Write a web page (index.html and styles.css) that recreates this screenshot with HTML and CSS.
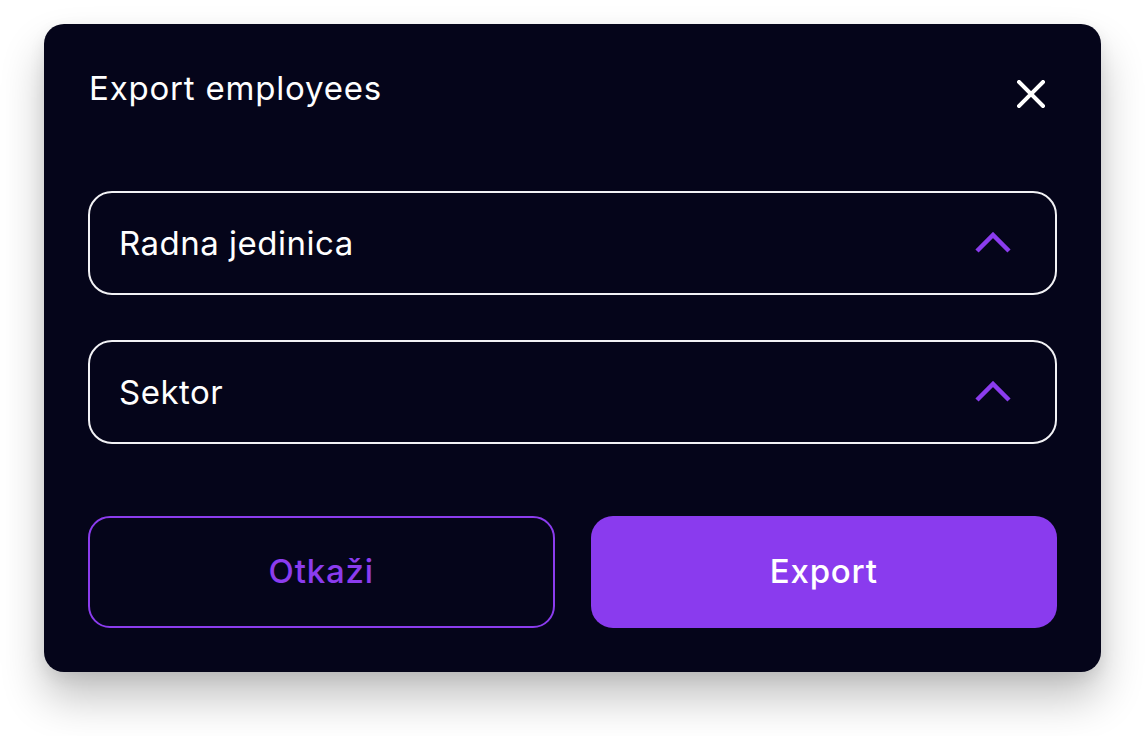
FILE: index.html
```html
<!DOCTYPE html>
<html lang="hr">
<head>
<meta charset="utf-8">
<title>Export employees</title>
<link rel="stylesheet" href="styles.css">
</head>
<body>
<div class="page">
<div class="modal">
  <div class="modal-header">
    <h1 class="modal-title">Export employees</h1>
    <button class="close-btn" aria-label="Close">
      <svg width="28" height="28" viewBox="0 0 28 28"><path d="M2 2 L26 26 M26 2 L2 26" stroke="#ffffff" stroke-width="4" stroke-linecap="square" fill="none"/></svg>
    </button>
  </div>
  <div class="fields">
    <div class="select">
      <span class="select-label">Radna jedinica</span>
      <svg class="chevron" width="36" height="22" viewBox="0 0 36 22"><polyline points="2,19 18,3 34,19" stroke="#8b3cee" stroke-width="4.5" fill="none"/></svg>
    </div>
    <div class="select">
      <span class="select-label">Sektor</span>
      <svg class="chevron" width="36" height="22" viewBox="0 0 36 22"><polyline points="2,19 18,3 34,19" stroke="#8b3cee" stroke-width="4.5" fill="none"/></svg>
    </div>
  </div>
  <div class="actions">
    <button class="btn btn-outline">Otkaži</button>
    <button class="btn btn-primary">Export</button>
  </div>
</div>
</div>
</body>
</html>
```

FILE: styles.css
```css
html, body {
  margin: 0;
  padding: 0;
  background: #ffffff;
}
body {
  font-family: "Inter", "Liberation Sans", sans-serif;
}
.page {
  width: 1146px;
  height: 736px;
  padding: 24px 0 0 44px;
  box-sizing: border-box;
  background: #ffffff;
}
.modal {
  box-sizing: border-box;
  width: 1057px;
  height: 648px;
  padding: 44px 44px 0 44px;
  background: #05051a;
  border-radius: 20px;
  box-shadow: 0 26px 44px rgba(0, 0, 0, 0.24), 0 6px 16px rgba(0, 0, 0, 0.08);
}
.modal-header {
  display: flex;
  justify-content: space-between;
  align-items: flex-start;
}
.modal-title {
  margin: 0 0 0 1px;
  font-size: 33px;
  line-height: 40px;
  font-weight: 400;
  color: #ffffff;
  letter-spacing: 0.8px;
}
.close-btn {
  margin: 12px 12px 0 0;
  padding: 0;
  border: 0;
  background: transparent;
  width: 28px;
  height: 28px;
  display: flex;
}
.fields {
  margin-top: 83px;
  display: flex;
  flex-direction: column;
  gap: 45px;
}
.select {
  box-sizing: border-box;
  height: 104px;
  border: 2px solid #f2f2f5;
  border-radius: 24px;
  display: flex;
  align-items: center;
  justify-content: space-between;
  padding: 0 44px 0 29px;
}
.select-label {
  font-size: 33px;
  color: #ffffff;
  font-weight: 400;
  letter-spacing: 0.5px;
}
.chevron {
  display: block;
}
.actions {
  margin-top: 72px;
  display: grid;
  grid-template-columns: 1fr 1fr;
  gap: 36px;
}
.btn {
  box-sizing: border-box;
  height: 112px;
  border-radius: 22px;
  font-family: "Inter", "Liberation Sans", sans-serif;
  font-size: 33px;
  font-weight: 500;
  letter-spacing: 0.8px;
  padding-bottom: 4px;
  cursor: pointer;
}
.btn-outline {
  background: transparent;
  border: 2px solid #8b3cee;
  color: #8b3cee;
}
.btn-primary {
  background: #8a3bee;
  border: 0;
  color: #ffffff;
}
```
